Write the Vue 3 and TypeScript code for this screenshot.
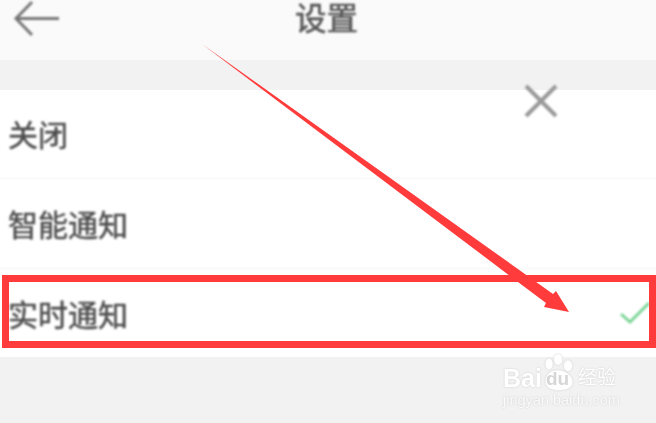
<script setup lang="ts">
const rows: { label: string; selected: boolean }[] = [
  { label: '关闭', selected: false },
  { label: '智能通知', selected: false },
  { label: '实时通知', selected: true },
]
</script>

<template>
  <div class="screen">
    <header class="bar">
      <svg class="back" width="48" height="40" viewBox="0 0 48 40" fill="none">
        <path d="M46 18.500H3M19 2 3 18.500 19 35" stroke="#777" stroke-width="3" />
      </svg>
      <h1 class="title">设置</h1>
    </header>
    <ul class="list">
      <li v-for="row in rows" :key="row.label" class="row">
        <span class="label">{{ row.label }}</span>
        <svg v-if="row.selected" class="check" width="32" height="24" viewBox="0 0 32 24" fill="none">
          <path d="M2 13 11 21 30 2" stroke="#7ad596" stroke-width="3" />
        </svg>
      </li>
    </ul>

    <svg class="close" width="36" height="36" viewBox="0 0 36 36" fill="none">
      <path d="M3 3 33 33M33 3 3 33" stroke="#999" stroke-width="4" />
    </svg>

    <div class="frame"></div>

    <svg class="arrow" width="656" height="423" viewBox="0 0 656 423">
      <path d="M202 44 553 294 556 291 569 312 544 307 546 303Z" fill="#ff3b3b" />
    </svg>

    <div class="mark">
      <div class="brand">
        <span class="bai">Bai</span>
        <span class="paw">
          <svg class="paw-icon" width="36" height="38" viewBox="0 0 36 42" fill="none">
            <ellipse cx="7" cy="11" rx="4" ry="6" fill="#fff" />
            <ellipse cx="17" cy="6" rx="4.500" ry="6" fill="#fff" />
            <ellipse cx="28" cy="13" rx="4.500" ry="6" fill="#fff" />
            <path d="M3 30C3 22 10 18 17 18 24 18 33 24 33 31 33 38 25 40 18 40 10 40 3 37 3 30Z" fill="#fff" />
          </svg>
          <span class="du">du</span>
        </span>
        <span class="jy">经验</span>
      </div>
      <div class="url">jingyan.baidu.com</div>
    </div>
  </div>
</template>

<style scoped>
.screen {
  position: relative;
  width: 656px;
  height: 423px;
  overflow: hidden;
  background: #f2f2f2;
  font-family: "Liberation Sans", "Noto Sans CJK SC", sans-serif;
}
.bar {
  position: relative;
  height: 60px;
  box-sizing: border-box;
  display: flex;
  align-items: center;
  justify-content: center;
  padding-bottom: 22px;
  background: #fafafa;
}
.back {
  position: absolute;
  left: 13px;
  top: 0;
  filter: blur(0.9px);
}
.title {
  margin: 0 3px 0 0;
  font-size: 31.500px;
  font-weight: 400;
  -webkit-text-stroke: 0.6px #555;
  line-height: 40px;
  color: #555;
  filter: blur(0.9px);
}
.list {
  margin: 30px 0 0;
  padding: 0;
  list-style: none;
  display: flex;
  flex-direction: column;
  gap: 3px;
  background: #fbfbfb;
}
.row {
  height: 87px;
  box-sizing: border-box;
  display: flex;
  align-items: center;
  justify-content: space-between;
  padding: 4px 6px 0 8px;
  background: #fff;
}
.label {
  font-size: 30px;
  line-height: 40px;
  color: #4d4d4d;
  -webkit-text-stroke: 0.5px #4d4d4d;
  filter: blur(0.9px);
}
.check {
  filter: blur(0.9px);
  margin-top: -6px;
  margin-right: -1px;
}
.close {
  position: absolute;
  left: 523px;
  top: 83px;
  filter: blur(1.200px);
}
.frame {
  position: absolute;
  left: 2px;
  top: 275px;
  width: 654px;
  height: 73px;
  box-sizing: border-box;
  border: 7px solid #ff3b3b;
}
.arrow {
  position: absolute;
  left: 0;
  top: 0;
}
.mark {
  position: absolute;
  left: 503px;
  top: 350px;
  width: 120px;
  color: #fff;
  filter: blur(0.5px);
}
.brand {
  display: flex;
  align-items: flex-end;
  height: 42px;
}
.bai {
  font-size: 25px;
  font-weight: 700;
  line-height: 28px;
  width: 38px;
  text-shadow: 0 0 2px #c8c8c8;
}
.paw {
  position: relative;
  width: 37px;
  height: 38px;
}
.paw-icon {
  filter: drop-shadow(0 0 1px #cfcfcf);
}
.du {
  position: absolute;
  left: 5px;
  bottom: 3px;
  font-size: 19px;
  font-weight: 700;
  line-height: 20px;
  color: #d6d6d6;
}
.jy {
  font-size: 19px;
  line-height: 28px;
  white-space: nowrap;
  text-shadow: 0 0 2px #c8c8c8;
}
.url {
  font-size: 14.500px;
  line-height: 16px;
  white-space: nowrap;
  color: #fafafa;
  text-shadow: 0 0 2px #c8c8c8;
}
</style>
